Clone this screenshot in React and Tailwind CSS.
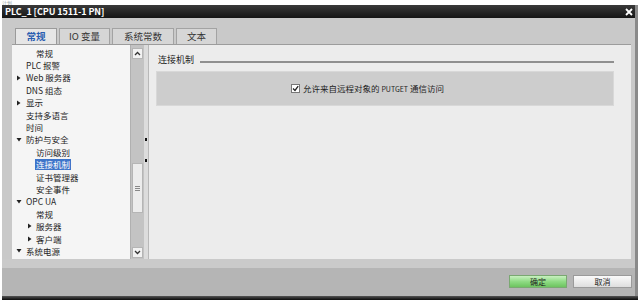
import React from "react";

const font = { fontFamily: '"Noto Sans CJK SC", "Noto Sans", sans-serif' };

const items = [
  { t: "常规", lvl: 1 },
  { t: "PLC 报警", lvl: 0 },
  { t: "Web 服务器", lvl: 0, arrow: "right" },
  { t: "DNS 组态", lvl: 0 },
  { t: "显示", lvl: 0, arrow: "right" },
  { t: "支持多语言", lvl: 0 },
  { t: "时间", lvl: 0 },
  { t: "防护与安全", lvl: 0, arrow: "down" },
  { t: "访问级别", lvl: 1 },
  { t: "连接机制", lvl: 1, sel: true },
  { t: "证书管理器", lvl: 1 },
  { t: "安全事件", lvl: 1 },
  { t: "OPC UA", lvl: 0, arrow: "down" },
  { t: "常规", lvl: 1 },
  { t: "服务器", lvl: 1, arrow: "right" },
  { t: "客户端", lvl: 1, arrow: "right" },
  { t: "系统电源", lvl: 0, arrow: "down" },
];

function Arrow({ dir }) {
  if (dir === "right")
    return (
      <svg width="5" height="6" viewBox="0 0 5 6">
        <path d="M1 0.5 L4.5 3 L1 5.5 Z" fill="#222" />
      </svg>
    );
  return (
    <svg width="6" height="5" viewBox="0 0 6 5">
      <path d="M0.5 1 L5.5 1 L3 4.5 Z" fill="#222" />
    </svg>
  );
}

function TreeRow({ it }) {
  const textLeft = it.lvl === 0 ? "pl-[13px]" : "pl-[23px]";
  return (
    <div className={`relative h-[12.4px] flex items-center ${textLeft}`}>
      {it.arrow && (
        <span
          className={`absolute top-[3px] flex items-center ${
            it.lvl === 0 ? "left-[4px]" : "left-[15px]"
          }`}
        >
          <Arrow dir={it.arrow} />
        </span>
      )}
      <span
        className={`text-[8.5px] leading-[11px] px-[1px] ${
          it.sel ? "bg-[#3d74c9] text-white" : "text-[#1e1e1e]"
        }`}
      >
        {it.t}
      </span>
    </div>
  );
}

function Tab({ label, active }) {
  return (
    <div
      className={`h-[16px] flex items-center justify-center border border-b-0 text-[9.5px] ${
        active
          ? "bg-[#e6e6e6] border-[#9a9a9a] text-[#2a5db0] font-bold"
          : "bg-[#d6d6d6] border-[#a3a3a3] text-[#333]"
      }`}
    >
      {label}
    </div>
  );
}

export default function App() {
  return (
    <div className="w-[640px] h-[303px] bg-white overflow-hidden relative" style={font}>
      <div className="h-[5px] flex items-start pl-[2px]">
        <span className="text-[5px] leading-[5px] text-[#9aa]">计划</span>
      </div>
      <div className="ml-[2px] w-[636px] h-[291px] flex flex-col border-r-[3px] border-[#8a8a8a]">
        {/* title bar */}
        <div className="h-[13px] bg-gradient-to-b from-[#3a3a3a] to-[#151515] flex items-center justify-between pl-[3px] pr-[2px]">
          <span className="text-white text-[9px] font-bold leading-none tracking-[-0.1px]">
            PLC_1 [CPU 1511-1 PN]
          </span>
          <svg width="8" height="8" viewBox="0 0 8 8">
            <path d="M1 1 L7 7 M7 1 L1 7" stroke="#fff" strokeWidth="1.8" />
          </svg>
        </div>
        {/* body */}
        <div className="flex-1 bg-[#c9c9c9] flex flex-col">
          <div className="h-[10px]" />
          <div className="flex items-end pl-[13px] gap-[2px] h-[16px]">
            <div className="w-[42px]"><Tab label="常规" active /></div>
            <div className="w-[51px]"><Tab label="IO 变量" /></div>
            <div className="w-[62px]"><Tab label="系统常数" /></div>
            <div className="w-[41px]"><Tab label="文本" /></div>
          </div>
          {/* content area */}
          <div className="ml-[10px] w-[619px] h-[215px] border-t border-[#9c9c9c] flex bg-[#ececec]">
            {/* tree */}
            <div className="w-[118px] bg-[#f5f5f5] pt-[2px]">
              {items.map((it, i) => (
                <TreeRow key={i} it={it} />
              ))}
            </div>
            {/* scrollbar */}
            <div className="w-[14px] bg-[#c3c3c3] flex flex-col border-l border-[#b0b0b0]">
              <div className="h-[11px] mx-[1px] mt-[3px] bg-[#f2f2f2] border border-[#b5b5b5] flex items-center justify-center">
                <svg width="7" height="5" viewBox="0 0 7 5">
                  <path d="M1 4 L3.5 1.5 L6 4" stroke="#333" strokeWidth="1.3" fill="none" />
                </svg>
              </div>
              <div className="h-[104px]" />
              <div className="h-[50px] mx-[1px] bg-[#ececec] border border-[#b5b5b5] flex items-center justify-center">
                <div className="w-[5px] flex flex-col gap-[1px]">
                  <div className="h-px bg-[#888]" />
                  <div className="h-px bg-[#888]" />
                  <div className="h-px bg-[#888]" />
                </div>
              </div>
              <div className="flex-1" />
              <div className="h-[11px] mx-[1px] mb-[1px] bg-[#f2f2f2] border border-[#b5b5b5] flex items-center justify-center">
                <svg width="7" height="5" viewBox="0 0 7 5">
                  <path d="M1 1 L3.5 3.5 L6 1" stroke="#333" strokeWidth="1.3" fill="none" />
                </svg>
              </div>
            </div>
            {/* splitter */}
            <div className="w-[5px] bg-[#dcdcdc] border-r border-[#b8b8b8] flex flex-col items-center">
              <div className="h-[93px]" />
              <div className="w-[2px] h-[3px] bg-[#111]" />
              <div className="h-[18px]" />
              <div className="w-[2px] h-[3px] bg-[#111]" />
            </div>
            {/* right pane */}
            <div className="flex-1 pl-[7px] pr-[17px] pt-[8px]">
              <div className="flex items-center h-[14px]">
                <span className="text-[9px] text-[#1e1e1e] pl-[2px] pr-[6px]">连接机制</span>
                <div className="flex-1 h-[2px] bg-[#8f8f8f] mt-[3px]" />
              </div>
              <div className="mt-[4px] h-[35px] bg-[#cdcdcd] border border-[#d8d8d8] flex items-center pl-[134px]">
                <div className="w-[9px] h-[9px] bg-white border border-[#777] flex items-center justify-center">
                  <svg width="7" height="7" viewBox="0 0 7 7">
                    <path d="M1 3.5 L3 5.5 L6.2 1.2" stroke="#222" strokeWidth="1.3" fill="none" />
                  </svg>
                </div>
                <span className="ml-[3px] text-[8.5px] text-[#1e1e1e]">
                  允许来自远程对象的 <span className="text-[7px]">PUTGET</span> 通信访问
                </span>
              </div>
            </div>
          </div>
          <div className="h-[9px] bg-[#cacaca]" />
          {/* bottom bar */}
          <div className="flex-1 bg-[#b5b5b5] flex justify-end items-start pt-[7px] pr-[3px] gap-[6px]">
            <div className="w-[58px] h-[13px] bg-gradient-to-b from-[#c8f0c0] via-[#8fdb84] to-[#6cc45f] border border-[#7aa872] flex items-center justify-center text-[8px] text-[#1e1e1e]">
              确定
            </div>
            <div className="w-[59px] h-[13px] bg-gradient-to-b from-[#fafafa] to-[#dedede] border border-[#9a9a9a] flex items-center justify-center text-[8px] text-[#1e1e1e]">
              取消
            </div>
          </div>
        </div>
      </div>
      <div className="ml-[2px] w-[636px] h-[4px] bg-gradient-to-b from-[#555] to-[#0d0d0d]" />
    </div>
  );
}
